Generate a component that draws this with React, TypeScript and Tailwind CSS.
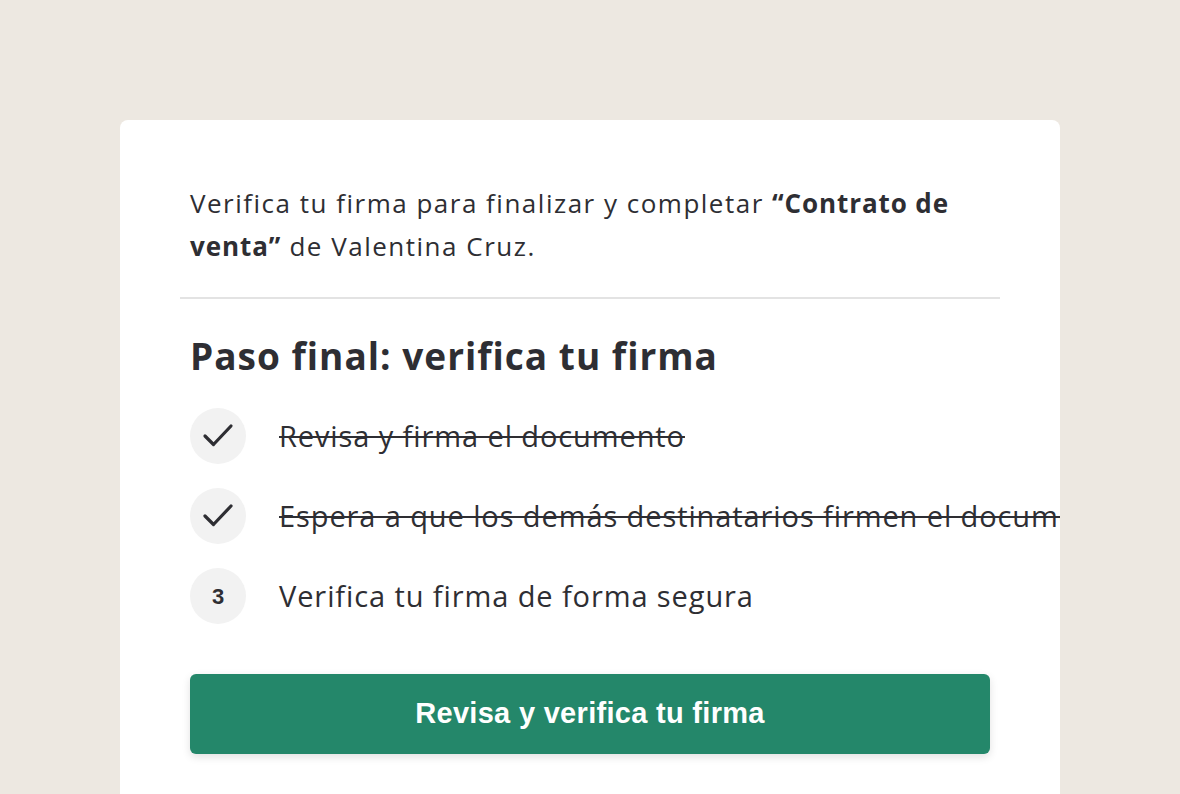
const steps = [
  { done: true, label: "Revisa y firma el documento" },
  { done: true, label: "Espera a que los demás destinatarios firmen el documento" },
  { done: false, num: 3, label: "Verifica tu firma de forma segura" },
]

function CheckMark() {
  return (
    <svg width="32" height="26" viewBox="0 0 32 26" fill="none">
      <polyline
        points="3,13 11.5,21.5 29,3"
        stroke="currentColor"
        strokeWidth="3.2"
        strokeLinecap="round"
        strokeLinejoin="round"
      />
    </svg>
  )
}

export default function App() {
  return (
    <div className="min-h-[794px] bg-[#ede8e1] pt-[120px] px-[120px] overflow-hidden">
      <div
        className="bg-white rounded-lg overflow-hidden px-[70px] pt-[62px] pb-[60px] text-[#2e2e33]"
        style={{ fontFamily: "'Open Sans', sans-serif" }}
      >
        <p className="text-[26px] leading-[43px] tracking-[1.5px] max-w-[800px]">
          Verifica tu firma para finalizar y completar{" "}
          <span className="font-bold tracking-[0.9px]">“Contrato de venta”</span> de Valentina Cruz.
        </p>

        <div className="-mx-[10px] mt-[29px] h-[2px] bg-[#e3e3e3]" />

        <h1 className="mt-[35px] text-[37px] leading-[44px] font-bold tracking-[1px]">
          Paso final: verifica tu firma
        </h1>

        <ul className="mt-[30px] flex flex-col gap-6">
          {steps.map((s, i) => (
            <li key={i} className="flex items-center gap-[33px]">
              <span className="flex h-14 w-14 shrink-0 items-center justify-center rounded-full bg-[#f2f2f2]">
                {s.done ? (
                  <CheckMark />
                ) : (
                  <span
                    className="text-[22px] font-bold"
                    style={{ fontFamily: "'Liberation Sans', Arial, sans-serif" }}
                  >
                    {s.num}
                  </span>
                )}
              </span>
              <span
                className={
                  "whitespace-nowrap text-[29px] tracking-[0.9px] " +
                  (s.done ? "line-through decoration-[2px]" : "")
                }
              >
                {s.label}
              </span>
            </li>
          ))}
        </ul>

        <button
          type="button"
          className="mt-[50px] flex h-20 w-full items-center justify-center rounded-md bg-[#24876a] text-[29px] font-bold tracking-[0.3px] text-white shadow-[0_3px_8px_rgba(0,0,0,0.12)]"
          style={{ fontFamily: "'Liberation Sans', Arial, sans-serif" }}
        >
          Revisa y verifica tu firma
        </button>
      </div>
    </div>
  )
}
